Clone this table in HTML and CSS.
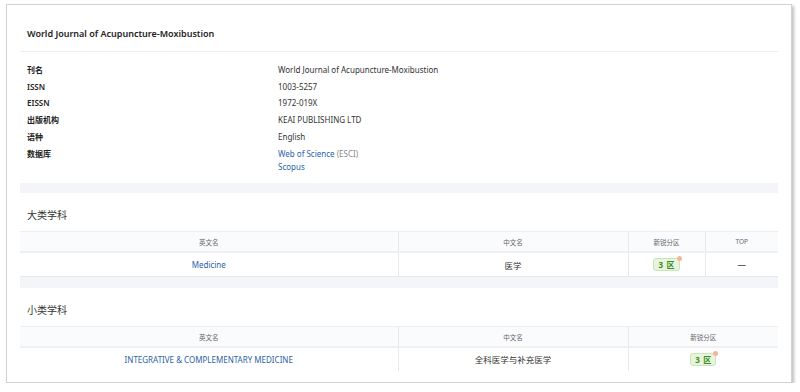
FILE: index.html
```html
<!DOCTYPE html>
<html lang="zh-CN">
<head>
    <meta charset="UTF-8">
    <title>World Journal of Acupuncture-Moxibustion</title>
    <link rel="stylesheet" href="styles.css">
</head>
<body>
    <div class="card">
        <div class="card-header">World Journal of Acupuncture-Moxibustion</div>

        <div class="info">
            <div class="info-label">刊名</div>
            <div class="info-value">World Journal of Acupuncture-Moxibustion</div>
            <div class="info-label">ISSN</div>
            <div class="info-value">1003-5257</div>
            <div class="info-label">EISSN</div>
            <div class="info-value">1972-019X</div>
            <div class="info-label">出版机构</div>
            <div class="info-value">KEAI PUBLISHING LTD</div>
            <div class="info-label">语种</div>
            <div class="info-value">English</div>
            <div class="info-label">数据库</div>
            <div class="info-value db-list">
                <div><a href="#" class="link">Web of Science</a> <span class="muted">(ESCI)</span></div>
                <div><a href="#" class="link">Scopus</a></div>
            </div>
        </div>

        <div class="band"></div>

        <h3 class="section-title">大类学科</h3>
        <table class="subject-table">
            <colgroup>
                <col style="width: 378px">
                <col style="width: 230px">
                <col style="width: 77px">
                <col>
            </colgroup>
            <thead>
                <tr>
                    <th>英文名</th>
                    <th>中文名</th>
                    <th>新锐分区</th>
                    <th>TOP</th>
                </tr>
            </thead>
            <tbody>
                <tr>
                    <td><a href="#" class="link">Medicine</a></td>
                    <td>医学</td>
                    <td><span class="zone">3 区</span></td>
                    <td class="dash">—</td>
                </tr>
            </tbody>
        </table>

        <div class="band band-tall"></div>

        <h3 class="section-title">小类学科</h3>
        <table class="subject-table last">
            <colgroup>
                <col style="width: 378px">
                <col style="width: 230px">
                <col>
            </colgroup>
            <thead>
                <tr>
                    <th>英文名</th>
                    <th>中文名</th>
                    <th>新锐分区</th>
                </tr>
            </thead>
            <tbody>
                <tr>
                    <td><a href="#" class="link">INTEGRATIVE &amp; COMPLEMENTARY MEDICINE</a></td>
                    <td>全科医学与补充医学</td>
                    <td><span class="zone">3 区</span></td>
                </tr>
            </tbody>
        </table>
    </div>
</body>
</html>
```

FILE: styles.css
```css
/* Base styles */
* {
    margin: 0;
    padding: 0;
    box-sizing: border-box;
}

body {
    background: #ffffff;
    color: #333333;
    font-family: 'Noto Sans', 'Noto Sans CJK SC', sans-serif;
    font-size: 8px;
}

.card {
    margin: 4px 8px 0 6px;
    height: 379px;
    padding: 0 13px;
    background: #ffffff;
    border: 1px solid #d2d2d2;
    box-shadow: 2px 2px 3px rgba(0, 0, 0, 0.25);
    overflow: hidden;
}

.card-header {
    height: 47px;
    padding: 22px 7px 0;
    font-size: 9px;
    font-weight: 600;
    color: #222222;
    border-bottom: 1px solid #eeeeee;
}

/* Journal info */
.info {
    display: grid;
    grid-template-columns: 251px 1fr;
    padding: 10px 7px 10px;
    line-height: 16.7px;
}

.info-label {
    font-weight: 600;
    color: #222222;
}

.info-value {
    color: #333333;
}

.db-list {
    padding-top: 1.8px;
    line-height: 13px;
}

.link {
    color: #2b62a8;
    text-decoration: none;
}

.muted {
    color: #888888;
}

.band {
    height: 10px;
    background: #f4f5f9;
}

.band-tall {
    height: 11px;
}

.section-title {
    height: 38px;
    padding: 14px 7px 0;
    font-size: 10px;
    font-weight: 400;
    color: #333333;
}

/* Subject tables */
.subject-table {
    width: 100%;
    border-collapse: collapse;
    table-layout: fixed;
    text-align: center;
}

.subject-table th {
    height: 20px;
    font-size: 6.5px;
    font-weight: 400;
    color: #666666;
    background: #fafbfd;
    border-top: 1px solid #eceef2;
    border-bottom: 2px solid #eef0f4;
}

.subject-table td {
    height: 25px;
    font-size: 8.5px;
    color: #333333;
    border-bottom: 1px solid #e6e8ec;
}

.subject-table td .link {
    font-size: 8px;
}

.subject-table.last td {
    height: 24px;
    border-bottom: none;
}

.subject-table th + th,
.subject-table td + td {
    border-left: 1px solid #e6e8ec;
}

.zone {
    position: relative;
    display: inline-block;
    padding: 0 4px;
    line-height: 11px;
    font-size: 8px;
    font-weight: 700;
    word-spacing: 1.5px;
    color: #3d8b22;
    background: #e7f5dd;
    border: 1px solid #c8e6b5;
    border-radius: 3px;
}

.zone::after {
    content: '';
    position: absolute;
    top: -3px;
    right: -3px;
    width: 5px;
    height: 5px;
    border-radius: 50%;
    background: #f6b596;
}

.dash {
    color: #aaaaaa;
}
```
